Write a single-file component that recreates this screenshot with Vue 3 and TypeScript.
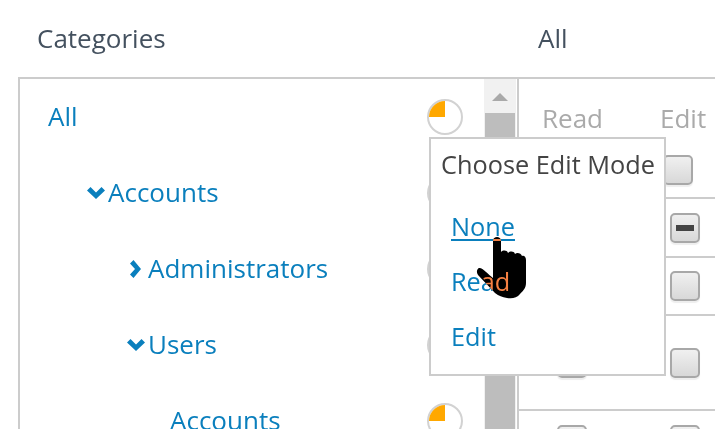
<script setup lang="ts">
interface TreeRow { label: string; level: string; chevron: 'down' | 'right' | null }
interface PermRow { key: string; height: string; read: string; edit: string }

const tree: TreeRow[] = [
  { label: 'All', level: 'lv0', chevron: null },
  { label: 'Accounts', level: 'lv1', chevron: 'down' },
  { label: 'Administrators', level: 'lv2', chevron: 'right' },
  { label: 'Users', level: 'lv2b', chevron: 'down' },
  { label: 'Accounts', level: 'lv3', chevron: null }
]

const perms: PermRow[] = [
  { key: 'a', height: 'h59', read: '', edit: 'minus' },
  { key: 'b', height: 'h58', read: '', edit: '' },
  { key: 'c', height: 'h95', read: '', edit: '' },
  { key: 'd', height: 'h59', read: '', edit: '' }
]

const modes = ['None', 'Read', 'Edit']
</script>

<template>
  <div class="page">
    <header class="heads">
      <h2 class="head first">Categories</h2>
      <h2 class="head">All</h2>
    </header>

    <div class="frame">
      <section class="tree">
        <div v-for="(row, i) in tree" :key="i" class="tree-row" :class="row.level">
          <svg v-if="row.chevron === 'down'" class="chev-down" viewBox="0 0 18 12">
            <path d="M0 3.5 L3.5 0 L9 5.5 L14.5 0 L18 3.5 L9 12 Z" fill="#0a7fbd" />
          </svg>
          <svg v-if="row.chevron === 'right'" class="chev-right" viewBox="0 0 11 18">
            <path d="M3.5 0 L11 9 L3.5 18 L0 14.5 L5 9 L0 3.5 Z" fill="#0a7fbd" />
          </svg>
          <a class="tree-link">{{ row.label }}</a>
          <svg class="pie" viewBox="0 0 36 36">
            <circle cx="18" cy="18" r="17" fill="#fff" stroke="#d2d2d2" stroke-width="2" />
            <path d="M18 18 V2 A16 16 0 0 0 2 18 Z" fill="#ffa800" />
          </svg>
        </div>
      </section>

      <aside class="scrollbar">
        <div class="arrow"></div>
        <div class="thumb"></div>
      </aside>

      <section class="perms">
        <div class="perm-head">
          <div class="labels">
            <span class="lab-read">Read</span>
            <span class="lab-edit">Edit</span>
          </div>
          <div class="first-boxes">
            <span class="box"></span>
          </div>
        </div>
        <div v-for="p in perms" :key="p.key" class="perm-row" :class="p.height">
          <span class="box"></span>
          <span class="box" :class="{ minus: p.edit === 'minus' }"></span>
        </div>
      </section>
    </div>

    <div class="popover">
      <div class="pop-title">Choose Edit Mode</div>
      <a v-for="(m, i) in modes" :key="m" class="pop-item" :class="{ hovered: i === 0 }">{{ m }}</a>
    </div>

    <svg class="cursor" viewBox="0 0 50 63">
      <path
        d="M17 5 C17 2 19 1 21 1 C23 1 25 2 25 5 L25 16 C27 14 31 14 32 17 C34 15 38 15 39 18 C41 16 45 17 46 20 C48 19 50 21 50 24 L50 47 C50 52 47 55 44 58 C41 62 36 63 31 62 C26 61 23 60 19 57 L2 39 C0 36 1 33 3 32 C6 31 12 38 17 42 Z"
        fill="#fff"
      />
    </svg>
  </div>
</template>

<style>
html, body { margin: 0; background: #fff; }
</style>

<style scoped>
.page {
  position: relative;
  width: 715px;
  height: 429px;
  overflow: hidden;
  background: #fff;
  font-family: "Open Sans", sans-serif;
  font-size: 26px;
}
.heads {
  display: flex;
  height: 77px;
  align-items: center;
  padding-bottom: 1px;
  box-sizing: border-box;
}
.head {
  margin: 0;
  font-size: 26px;
  font-weight: 400;
  color: #44515f;
}
.first {
  width: 501px;
  padding-left: 37px;
  box-sizing: content-box;
}
.frame {
  display: flex;
  margin-left: 18px;
  width: 720px;
  height: 420px;
  border-top: 2px solid #ccc;
  border-left: 2px solid #ccc;
}
.tree {
  width: 464px;
  flex: none;
}
.tree-row {
  display: flex;
  align-items: center;
  height: 76px;
  box-sizing: border-box;
}
.lv0 { padding-left: 28px; }
.lv1 { padding-left: 67px; }
.lv2 { padding-left: 110px; }
.lv2b { padding-left: 107px; }
.lv3 { padding-left: 150px; }
.tree-link {
  color: #0a7fbd;
  line-height: 34px;
  margin-top: -2px;
}
.chev-down {
  width: 18px;
  height: 12px;
  margin-right: 3px;
  flex: none;
}
.chev-right {
  width: 11px;
  height: 18px;
  margin-right: 7px;
  flex: none;
}
.pie {
  width: 36px;
  height: 36px;
  margin-left: auto;
  margin-right: 21px;
  flex: none;
}
.scrollbar {
  width: 33px;
  flex: none;
  display: flex;
  flex-direction: column;
  background: #f1f1f1;
  border-right: 1px solid #fff;
  box-sizing: border-box;
  padding: 0 1px;
}
.arrow {
  height: 34px;
  flex: none;
  position: relative;
}
.arrow::before {
  content: "";
  position: absolute;
  left: 7px;
  top: 14px;
  border-left: 8px solid transparent;
  border-right: 8px solid transparent;
  border-bottom: 8px solid #a9a9a9;
}
.thumb {
  flex: 1;
  background: #bdbdbd;
}
.perms {
  flex: 1;
  border-left: 2px solid #ccc;
  color: #aaa;
}
.perm-head {
  height: 118px;
  border-bottom: 2px solid #ccc;
  box-sizing: content-box;
}
.labels {
  display: flex;
  padding-top: 21px;
  line-height: 36px;
}
.lab-read {
  margin-left: 23px;
  width: 118px;
}
.first-boxes {
  padding-left: 144px;
  padding-top: 19px;
}
.perm-row {
  display: flex;
  align-items: center;
  gap: 83px;
  padding-left: 38px;
  border-bottom: 2px solid #ccc;
  box-sizing: border-box;
}
.h59 { height: 59px; }
.h58 { height: 58px; }
.h95 { height: 95px; }
.box {
  display: block;
  position: relative;
  width: 30px;
  height: 30px;
  flex: none;
  box-sizing: border-box;
  border: 2px solid #a8a8a8;
  border-radius: 5px;
  background: linear-gradient(#f0f0f0, #d8d8d8);
  box-shadow: 0 2px 1px #eee;
}
.minus::after {
  content: "";
  position: absolute;
  left: 4px;
  right: 4px;
  top: 10px;
  height: 6px;
  background: #444;
}
.popover {
  position: absolute;
  left: 429px;
  top: 137px;
  width: 237px;
  height: 239px;
  box-sizing: border-box;
  border: 2px solid #ccc;
  background: #fff;
  display: flex;
  flex-direction: column;
  font-size: 25.3px;
}
.pop-title {
  padding: 8px 0 0 10px;
  height: 67px;
  box-sizing: border-box;
  line-height: 34px;
  color: #444;
}
.pop-item {
  margin-left: 20px;
  height: 55px;
  line-height: 34px;
  padding-top: 3px;
  box-sizing: border-box;
  color: #0a7fbd;
  align-self: flex-start;
}
.hovered {
  text-decoration: underline;
  text-decoration-thickness: 2px;
  text-underline-offset: 3px;
}
.cursor {
  position: absolute;
  left: 476px;
  top: 236px;
  width: 50px;
  height: 63px;
  mix-blend-mode: difference;
}
</style>
